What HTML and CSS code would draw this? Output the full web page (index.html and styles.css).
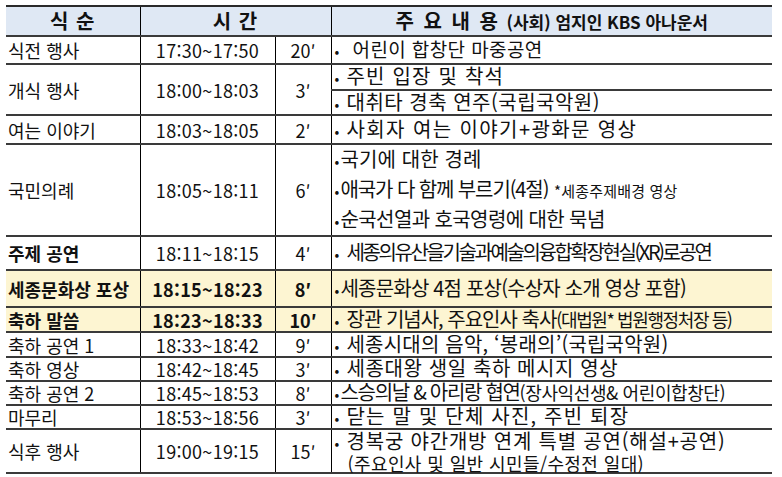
FILE: index.html
```html
<!DOCTYPE html>
<html lang="ko">
<head>
<meta charset="utf-8">
<title>식순</title>
<link rel="stylesheet" href="styles.css">
</head>
<body>
<table class="prog">
  <colgroup>
    <col class="c1"><col class="c2"><col class="c3"><col class="c4">
  </colgroup>
  <thead>
    <tr class="head">
      <th class="vl">식 순</th>
      <th class="vl" colspan="2">시 간</th>
      <th><span class="hbig">주 요 내 용</span> <span class="hsm">(사회) 엄지인 KBS 아나운서</span></th>
    </tr>
  </thead>
  <tbody>
    <tr class="r1">
      <td class="name">식전 행사</td><td class="time">17:30~17:50</td><td class="dur">20′</td>
      <td class="desc"><span class="b">•</span><span class="t1">어린이 합창단 마중공연</span></td>
    </tr>
    <tr class="r2a">
      <td class="name" rowspan="2">개식 행사</td><td class="time" rowspan="2">18:00~18:03</td><td class="dur" rowspan="2">3′</td>
      <td class="desc"><span class="b">•</span><span class="t2a">주빈 입장 및 착석</span></td>
    </tr>
    <tr class="r2b">
      <td class="desc"><span class="b">•</span><span class="t2b">대취타 경축 연주(국립국악원)</span></td>
    </tr>
    <tr class="r3">
      <td class="name">여는 이야기</td><td class="time">18:03~18:05</td><td class="dur">2′</td>
      <td class="desc"><span class="b">•</span><span class="t3">사회자 여는 이야기+광화문 영상</span></td>
    </tr>
    <tr class="r4">
      <td class="name">국민의례</td><td class="time">18:05~18:11</td><td class="dur">6′</td>
      <td class="desc multi">
        <div class="ln"><span class="b n">•</span><span class="t4a">국기에 대한 경례</span></div>
        <div class="ln"><span class="b n">•</span><span class="t4b">애국가 다 함께 부르기(4절)</span> <span class="small">*세종주제배경 영상</span></div>
        <div class="ln"><span class="b n">•</span><span class="t4c">순국선열과 호국영령에 대한 묵념</span></div>
      </td>
    </tr>
    <tr class="r5">
      <td class="name bold">주제 공연</td><td class="time">18:11~18:15</td><td class="dur">4′</td>
      <td class="desc"><span class="b">•</span><span class="t5">세종의유산을기술과예술의융합확장현실(XR)로공연</span></td>
    </tr>
    <tr class="r6 hl">
      <td class="name bold">세종문화상 포상</td><td class="time bold">18:15~18:23</td><td class="dur bold">8′</td>
      <td class="desc"><span class="b n">•</span><span class="t6">세종문화상 4점 포상(수상자 소개 영상 포함)</span></td>
    </tr>
    <tr class="r7 hl">
      <td class="name bold">축하 말씀</td><td class="time bold">18:23~18:33</td><td class="dur bold">10′</td>
      <td class="desc"><span class="b">•</span><span class="t7">장관 기념사, 주요인사 축사</span><span class="t7p">(대법원* 법원행정처장 등)</span></td>
    </tr>
    <tr class="r8">
      <td class="name">축하 공연 1</td><td class="time">18:33~18:42</td><td class="dur">9′</td>
      <td class="desc"><span class="b">•</span><span class="t8">세종시대의 음악, ‘봉래의’(국립국악원)</span></td>
    </tr>
    <tr class="r9">
      <td class="name">축하 영상</td><td class="time">18:42~18:45</td><td class="dur">3′</td>
      <td class="desc"><span class="b">•</span><span class="t9">세종대왕 생일 축하 메시지 영상</span></td>
    </tr>
    <tr class="r10">
      <td class="name">축하 공연 2</td><td class="time">18:45~18:53</td><td class="dur">8′</td>
      <td class="desc"><span class="b n">•</span><span class="t10">스승의날 &amp; 아리랑 협연</span><span class="t10p">(장사익선생&amp; 어린이합창단)</span></td>
    </tr>
    <tr class="r11">
      <td class="name">마무리</td><td class="time">18:53~18:56</td><td class="dur">3′</td>
      <td class="desc"><span class="b">•</span><span class="t11">닫는 말 및 단체 사진, 주빈 퇴장</span></td>
    </tr>
    <tr class="r12">
      <td class="name">식후 행사</td><td class="time">19:00~19:15</td><td class="dur">15′</td>
      <td class="desc multi2">
        <div class="ln1"><span class="b">•</span><span class="t12">경복궁 야간개방 연계 특별 공연(해설+공연)</span></div>
        <div class="ln2">(주요인사 및 일반 시민들/수정전 일대)</div>
      </td>
    </tr>
  </tbody>
</table>
</body>
</html>
```

FILE: styles.css
```css
html, body {
  margin: 0;
  padding: 0;
  background: #ffffff;
}

body {
  padding: 5px 0 0 6px;
  font-family: "Noto Sans CJK KR", "Noto Sans", sans-serif;
  color: #111111;
}

.prog {
  border-collapse: collapse;
  table-layout: fixed;
  width: 766px;
  font-size: 18px;
  line-height: 20px;
}

.c1 { width: 134px; }
.c2 { width: 135px; }
.c3 { width: 56px; }
.c4 { width: 441px; }

.prog th,
.prog td {
  padding: 0;
  vertical-align: middle;
  white-space: nowrap;
}

.prog tr {
  border-bottom: 2px solid #3a3a3a;
}

.head {
  border-top: 2px solid #2a2a2a;
  background: #dfe8f4;
  height: 30px;
}

.head th {
  font-weight: 700;
  text-align: center;
  font-size: 20px;
  letter-spacing: 1px;
}

.head th.vl,
.prog td.name,
.prog td.time,
.prog td.dur {
  border-right: 1px solid #000000;
}

.hbig {
  font-size: 20px;
  letter-spacing: 2px;
}

.hsm {
  font-size: 17px;
  letter-spacing: 0;
}

.name {
  text-align: left;
  padding-left: 2px !important;
}

.time,
.dur {
  text-align: center;
}

.time {
  letter-spacing: 0.3px;
}

.bold {
  font-weight: 700;
}

.desc {
  text-align: left;
  padding-left: 2px !important;
  font-size: 20px;
}

.b {
  display: inline-block;
  width: 12px;
  font-size: 14px;
  padding-left: 1px;
}

.b.n {
  width: 6px;
}

.t1 { font-size: 19px; letter-spacing: 0.4px; padding-left: 6px; }
.t2a { letter-spacing: 1.2px; }
.t2b { letter-spacing: 0.5px; }
.t3 { letter-spacing: 1.4px; }
.t4a { letter-spacing: 0.1px; }
.t4b { letter-spacing: -1.1px; }
.t4c { letter-spacing: -0.6px; }
.t5 { letter-spacing: -2.4px; }
.t6 { letter-spacing: -0.8px; }
.t7 { letter-spacing: -1px; }
.t7p { font-size: 18px; letter-spacing: -1.4px; }
.t8 { letter-spacing: 0.2px; }
.t9 { letter-spacing: 0.6px; }
.t10 { letter-spacing: -1.3px; }
.t10p { font-size: 18px; letter-spacing: -0.4px; }
.t11 { letter-spacing: 1.2px; }
.t12 { letter-spacing: 0.8px; }

.small {
  font-size: 15px;
  letter-spacing: 0.2px;
}

.r2a {
  border-bottom: 1px solid #777777;
}

.r1 { height: 28px; }
.r2a { height: 26px; }
.r2b { height: 25px; }
.r3 { height: 29px; }
.r4 { height: 83px; }
.r5 { height: 34px; }
.r6 { height: 37px; }
.r7 { height: 25px; }
.r8 { height: 25px; }
.r9 { height: 23px; }
.r10 { height: 24px; }
.r11 { height: 23px; }
.r12 { height: 43px; }

.hl {
  background: #fdf5d2;
}

.multi .ln {
  line-height: 27px;
}

.multi2 .ln1 {
  line-height: 22px;
}

.multi2 .ln2 {
  line-height: 18px;
  padding-left: 14px;
  letter-spacing: 0.4px;
  font-size: 18px;
}
```
